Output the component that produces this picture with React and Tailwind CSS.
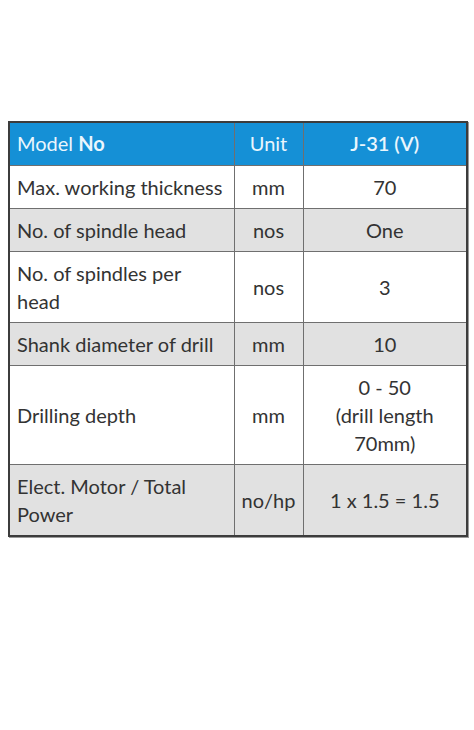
const rows = [
  { label: 'Max. working thickness', unit: 'mm', value: ['70'] },
  { label: 'No. of spindle head', unit: 'nos', value: ['One'] },
  { label: 'No. of spindles per head', unit: 'nos', value: ['3'] },
  { label: 'Shank diameter of drill', unit: 'mm', value: ['10'] },
  { label: 'Drilling depth', unit: 'mm', value: ['0 - 50', '(drill length 70mm)'] },
  { label: 'Elect. Motor / Total Power', unit: 'no/hp', value: ['1 x 1.5 = 1.5'] },
];

export default function App() {
  return (
    <div className="w-[474px] h-[730px] bg-white pt-[121px] px-[8px]" style={{ fontFamily: 'Lato, "Open Sans", sans-serif' }}>
      <table className="w-[458px] table-fixed border-collapse border-2 border-[#3c3c3c] shadow-[1px_1px_0_#9a9a9a] text-[20px] leading-[28px] text-[#333]">
        <colgroup>
          <col className="w-[225px]" />
          <col className="w-[69px]" />
          <col className="w-[164px]" />
        </colgroup>
        <thead>
          <tr className="bg-[#1590d6] text-[#eaf6fd]">
            <th className="border border-[#6f6f6f] px-[7px] pt-[6px] pb-[8px] text-left font-normal">
              Model <span className="font-bold">No</span>
            </th>
            <th className="border border-[#6f6f6f] px-[4px] pt-[6px] pb-[8px] font-normal">Unit</th>
            <th className="border border-[#6f6f6f] px-[7px] pt-[6px] pb-[8px] font-semibold">J-31 (V)</th>
          </tr>
        </thead>
        <tbody>
          {rows.map((r, i) => (
            <tr key={r.label} className={i % 2 === 1 ? 'bg-[#e1e1e1]' : 'bg-white'}>
              <td className="border border-[#6f6f6f] px-[7px] py-[7px] align-middle">{r.label}</td>
              <td className="border border-[#6f6f6f] px-[2px] py-[7px] text-center align-middle">{r.unit}</td>
              <td className="border border-[#6f6f6f] px-[7px] py-[7px] text-center align-middle">
                {r.value.map((v) => (
                  <div key={v}>{v}</div>
                ))}
              </td>
            </tr>
          ))}
        </tbody>
      </table>
    </div>
  );
}
